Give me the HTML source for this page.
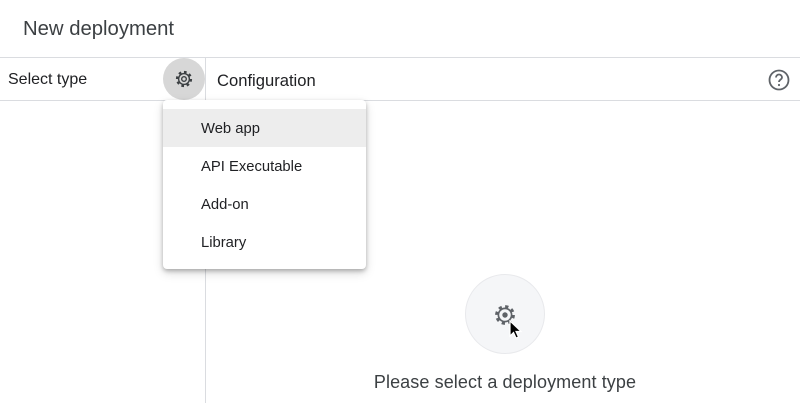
<!DOCTYPE html>
<html><head><meta charset="utf-8"><style>
body{margin:0;width:800px;height:403px;background:#fff;font-family:"Liberation Sans",Arial,sans-serif;color:#202124;position:relative;overflow:hidden}
.a{position:absolute}
.t{left:23px;top:18px;font-size:20.3px;color:#3c4043}
.menu{left:163px;top:100px;width:203px;height:169px;background:#fff;border-radius:4px;box-shadow:0 2px 4px rgba(0,0,0,.25),0 4px 10px rgba(0,0,0,.15)}
.it{position:absolute;left:0;width:203px;height:38px;line-height:40px;font-size:14.8px;padding-left:38px;box-sizing:border-box;color:#202124}
</style></head><body>
<div class="a t">New deployment</div>
<div class="a" style="left:0;top:57px;width:800px;height:1px;background:#dadce0"></div>
<div class="a" style="left:0;top:100px;width:800px;height:1px;background:#dadce0"></div>
<div class="a" style="left:205px;top:57px;width:1px;height:346px;background:#dadce0"></div>
<div class="a" style="left:8px;top:71px;font-size:16px">Select type</div>
<div class="a" style="left:217px;top:71px;font-size:16.6px">Configuration</div>
<div class="a" style="left:163px;top:58px;width:42px;height:42px;border-radius:50%;background:#d7d7d7"></div>
<svg class="a" style="left:174px;top:69px" width="20" height="20" viewBox="0 0 20 20"><circle cx="10" cy="10" r="5.4" fill="none" stroke="#3c4043" stroke-width="1.4"/><circle cx="10" cy="10" r="6.8" fill="none" stroke="#3c4043" stroke-width="2.6" stroke-dasharray="2.6 2.7"/><circle cx="10" cy="10" r="2.3" fill="none" stroke="#3c4043" stroke-width="1.4"/></svg>
<svg class="a" style="left:767px;top:68px" width="24" height="24" viewBox="0 0 24 24"><circle cx="12" cy="12" r="9.5" fill="none" stroke="#5f6368" stroke-width="1.8"/><path d="M9 9.5a3 3 0 0 1 6 0c0 2-3 2.2-3 4.5" fill="none" stroke="#5f6368" stroke-width="1.8"/><circle cx="12" cy="17" r="1.1" fill="#5f6368"/></svg>
<div class="a menu">
<div class="it" style="top:9px;background:#ededed">Web app</div>
<div class="it" style="top:47px">API Executable</div>
<div class="it" style="top:85px">Add-on</div>
<div class="it" style="top:123px">Library</div>
</div>
<div class="a" style="left:465px;top:274px;width:80px;height:80px;border-radius:50%;background:#f5f6f8;border:1px solid #e8e9ec;box-sizing:border-box"></div>
<svg class="a" style="left:493px;top:303px" width="24" height="24" viewBox="0 0 24 24"><circle cx="12" cy="12" r="6.6" fill="none" stroke="#5f6368" stroke-width="1.7"/><circle cx="12" cy="12" r="8.3" fill="none" stroke="#5f6368" stroke-width="3.2" stroke-dasharray="3.2 3.3"/><circle cx="12" cy="12" r="2.7" fill="#5f6368"/></svg>
<svg class="a" style="left:509px;top:320px" width="14" height="20" viewBox="0 0 14 20"><path d="M1 1v15l3.5-3.5 2.5 5.5 2.5-1-2.5-5.5h5z" fill="#000" stroke="#fff" stroke-width="1.2"/></svg>
<div class="a" style="left:255px;width:500px;text-align:center;top:372px;font-size:18px;color:#3c4043;letter-spacing:0.1px">Please select a deployment type</div>
</body></html>
